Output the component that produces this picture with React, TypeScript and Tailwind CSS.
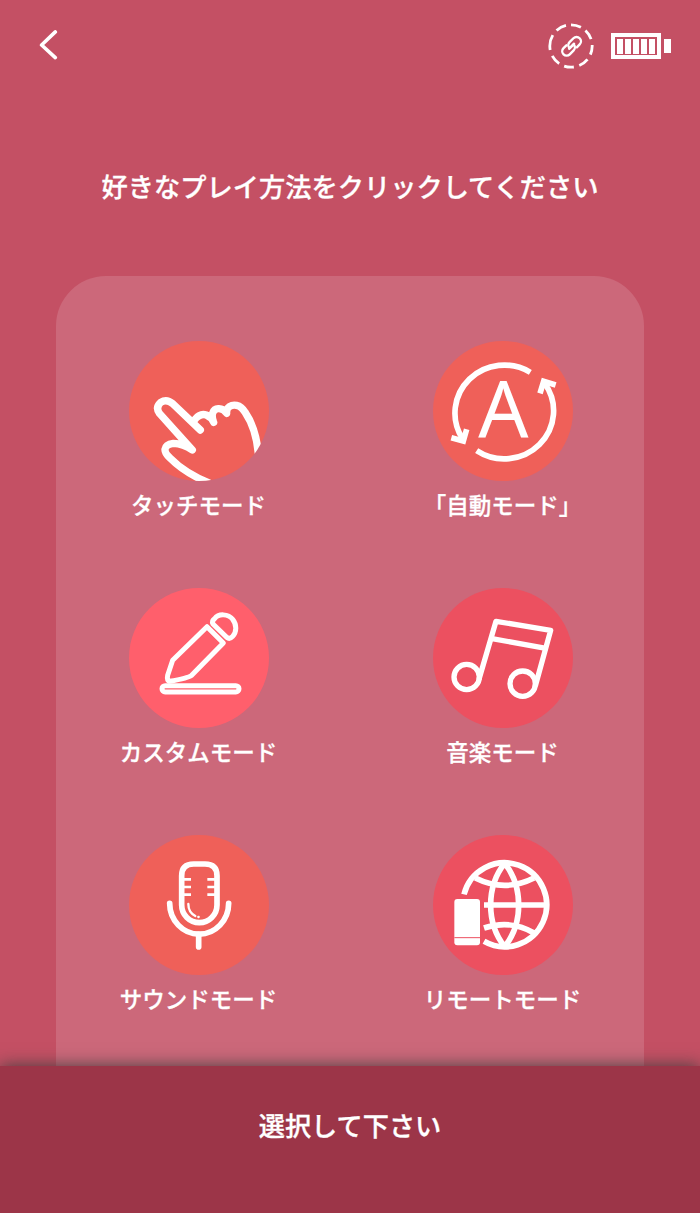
import { ReactNode } from "react";

interface Mode {
    label: string;
    color: string;
    icon: ReactNode;
}

const TouchIcon = () => (
    <svg viewBox="27 18 420 420" className="w-full h-full" fill="none" stroke="white" strokeWidth="22" strokeLinecap="round" strokeLinejoin="round">
        <path d="M241 285 L158 206 Q140 191 122 202 Q105 218 119 236 L217 345 Q190 326 160 325 Q137 328 135 343 Q134 355 150 369 Q195 415 270 445" />
        <path d="M224 254 Q240 234 259 240 Q274 246 281 262 C272 240 278 222 295 221 Q310 220 320 235 C318 215 335 208 350 211 Q365 214 376 233 Q408 280 415 355" />
    </svg>
);

const AutoIcon = () => (
    <svg viewBox="27 18 420 420" className="w-full h-full" fill="none" stroke="white" strokeWidth="17">
        <path d="M319 112 A148 144 0 0 0 115 310" />
        <path d="M158 347 A148 144 0 0 0 362 145" />
        <path d="M82 308 L118 318 L128 283" />
        <path d="M348 175 L359 139 L395 150" />
        <text x="238" y="305" textAnchor="middle" fontSize="236" fill="white" stroke="none" className="font-normal font-['Noto_Sans']">A</text>
    </svg>
);

const CustomIcon = () => (
    <svg viewBox="57 23 420 420" className="w-full h-full" fill="none" stroke="white" strokeWidth="15" strokeLinejoin="round">
        <path d="M291 139 L340 188 L245 285 Q235 293 178 303 Q170 300 173 285 L188 240 Z" />
        <path d="M309 131 Q304 122 314 115 C325 99 355 100 368 117 C381 133 380 155 368 168 Q359 178 350 171 Z" />
        <rect x="156" y="316" width="231" height="19" rx="9.5" />
    </svg>
);

const MusicIcon = () => (
    <svg viewBox="27 23 420 420" className="w-full h-full" fill="none" stroke="white" strokeWidth="16" strokeLinejoin="round">
        <circle cx="128" cy="290" r="38" />
        <circle cx="296" cy="310" r="38" />
        <path d="M165 297 L216 123 L380 150 L334 317" />
        <path d="M204 175 L366 204" />
    </svg>
);

const SoundIcon = () => (
    <svg viewBox="58 20 420 420" className="w-full h-full" fill="none" stroke="white" strokeWidth="17" strokeLinecap="round">
        <path d="M216 142 Q216 107 252 107 H286 Q322 107 322 142 V230 A53 53 0 0 1 216 230 Z" />
        <path d="M180 225 A88 92 0 0 0 357 225" />
        <path d="M267 318 V356" />
        <path d="M222 153 H244 M222 176 H244 M222 199 H244 M293 153 H316 M293 176 H316 M293 199 H316" strokeWidth="8" strokeLinecap="butt" />
        <path d="M236 227 Q236 252 257 263 M266 266 H267" strokeWidth="7" />
    </svg>
);

const RemoteIcon = () => (
    <svg viewBox="39 20 420 420" className="w-full h-full" fill="none" stroke="white" strokeWidth="17" strokeLinejoin="bevel">
        <path d="M132 198 A126 126 0 1 1 192 339" />
        <path d="M254 105 C198 175 198 285 254 355 C310 285 310 175 254 105 Z" />
        <path d="M192 230 H380" />
        <path d="M166 149 Q254 193 342 149" />
        <path d="M192 299 Q272 273 342 314" />
        <rect x="103" y="212" width="77" height="139" rx="9" fill="white" stroke="none" />
        <path d="M103 328 H180" stroke="#ec5060" strokeWidth="3" />
    </svg>
);

const LinkStatus = () => (
    <svg viewBox="0 0 48 48" className="w-[48px] h-[48px]" fill="none" stroke="white">
        <circle
            cx="24" cy="24" r="21.2" strokeWidth="2.8" pathLength="360"
            strokeDasharray="28 15 28 16 27 15 28 15 27 15 28 17 42 16 29 14"
            transform="rotate(-90 24 24)"
        />
        <g transform="translate(24.6 24.3) rotate(-45)" strokeWidth="2.4" strokeLinecap="round">
            <path d="M-3 -4.4 H-7 A4.4 4.4 0 0 0 -7 4.4 H-1.5 A4.4 4.4 0 0 0 2.8 0 H-3.5" />
            <path d="M3 4.4 H7 A4.4 4.4 0 0 0 7 -4.4 H1.5 A4.4 4.4 0 0 0 -2.8 0 H3.5" />
        </g>
    </svg>
);

const Battery = () => (
    <div className="flex items-center gap-[3px]">
        <div className="w-[50px] h-[26px] border-[4px] border-white flex items-center justify-center gap-[2px]">
            {[1, 2, 3, 4, 5].map((bar) => (
                <div key={bar} className="w-[6px] h-[15px] bg-white"></div>
            ))}
        </div>
        <div className="w-[7px] h-[14px] bg-white"></div>
    </div>
);

const modes: Mode[] = [
    { label: "タッチモード", color: "bg-[#ef6059]", icon: <TouchIcon /> },
    { label: "「自動モード」", color: "bg-[#ef6059]", icon: <AutoIcon /> },
    { label: "カスタムモード", color: "bg-[#ff5f6c]", icon: <CustomIcon /> },
    { label: "音楽モード", color: "bg-[#ec5060]", icon: <MusicIcon /> },
    { label: "サウンドモード", color: "bg-[#ef6059]", icon: <SoundIcon /> },
    { label: "リモートモード", color: "bg-[#ec5060]", icon: <RemoteIcon /> },
];

function ModeButton({ label, color, icon }: Mode) {
    return (
        <button className="w-[180px] h-[247px] flex flex-col items-center">
            <div className={`w-[140px] h-[140px] rounded-full overflow-hidden ${color}`}>
                {icon}
            </div>
            <span className="mt-[7px] mr-[1px] text-[22.5px] leading-[32px] whitespace-nowrap">{label}</span>
        </button>
    );
}

export default function App() {
    return (
        <div className="w-[700px] h-[1213px] flex flex-col overflow-hidden bg-[#c45064] text-white font-medium font-['Noto_Sans_CJK_JP',sans-serif] [-webkit-text-stroke:0.3px_white]">
            {/* Top bar */}
            <header className="h-[92px] shrink-0 flex items-center justify-between pl-[38px] pr-[29px]">
                <svg viewBox="0 0 22 32" className="w-[22px] h-[32px]" fill="none" stroke="white" strokeWidth="3.6" strokeLinecap="round" strokeLinejoin="round">
                    <path d="M17.3 1.9 L3.6 15 L17.3 27.6" />
                </svg>
                <div className="flex items-center gap-[16px]">
                    <LinkStatus />
                    <Battery />
                </div>
            </header>

            <h1 className="h-[184px] shrink-0 pt-[74px] text-center text-[26.25px] leading-[40px]">
                好きなプレイ方法をクリックしてください
            </h1>

            {/* Mode list */}
            <main className="h-[790px] shrink-0 mx-[56px] pt-[65px] rounded-t-[50px] bg-[#cc687a] overflow-hidden">
                <div className="grid grid-cols-[180px_180px] gap-x-[124px] pl-[53px]">
                    {modes.map((mode) => (
                        <ModeButton key={mode.label} {...mode} />
                    ))}
                </div>
            </main>

            {/* Bottom action */}
            <footer className="relative grow flex justify-center pt-[39px] bg-[#9c3548] shadow-[0_0_16px_rgba(60,60,60,0.95)]">
                <button className="h-[40px] text-[26.2px] leading-[40px]">選択して下さい</button>
            </footer>
        </div>
    );
}
